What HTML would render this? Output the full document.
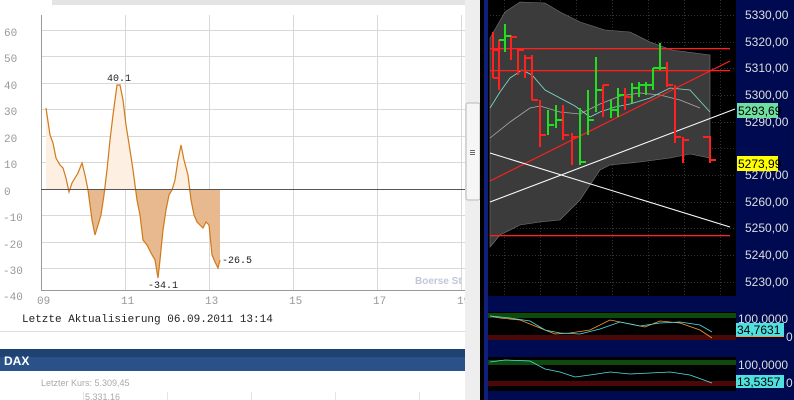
<!DOCTYPE html>
<html><head><meta charset="utf-8"><style>
html,body{margin:0;padding:0;width:794px;height:400px;overflow:hidden;background:#fff;font-family:"Liberation Sans",sans-serif}
</style></head><body>
<svg width="794" height="400" viewBox="0 0 794 400" xmlns="http://www.w3.org/2000/svg" style="position:absolute;left:0;top:0">
<defs>
<clipPath id="up"><rect x="0" y="0" width="470" height="189"/></clipPath>
<clipPath id="dn"><rect x="0" y="189" width="470" height="120"/></clipPath>
</defs>
<rect x="0" y="0" width="470" height="400" fill="#fff"/>
<rect x="52" y="0" width="413" height="5" fill="#e4e4e4"/>
<g stroke="#d8d8d8" stroke-width="1">
<line x1="41" y1="30.5" x2="465" y2="30.5"/><line x1="41" y1="56.5" x2="465" y2="56.5"/><line x1="41" y1="83.5" x2="465" y2="83.5"/><line x1="41" y1="109.5" x2="465" y2="109.5"/><line x1="41" y1="136.5" x2="465" y2="136.5"/><line x1="41" y1="162.5" x2="465" y2="162.5"/><line x1="41" y1="215.5" x2="465" y2="215.5"/><line x1="41" y1="242.5" x2="465" y2="242.5"/><line x1="41" y1="268.5" x2="465" y2="268.5"/>
<line x1="125.5" y1="15" x2="125.5" y2="290"/><line x1="209.5" y1="15" x2="209.5" y2="290"/><line x1="293.5" y1="15" x2="293.5" y2="290"/><line x1="377.5" y1="15" x2="377.5" y2="290"/><line x1="461.5" y1="15" x2="461.5" y2="290"/>
</g>
<line x1="41.5" y1="15" x2="41.5" y2="290" stroke="#999"/>
<line x1="41" y1="290.5" x2="465" y2="290.5" stroke="#999"/>
<polygon clip-path="url(#up)" fill="#fdf0e2" points="46,189 46,108 50,135 53,143 56,158 60,165 63,168 66,178 69,192 72,183 78,173 82,163 85,175 88,190 92,220 95,235 98,225 101,215 104,195 107,170 110,140 113,115 117,85 120,85 123,100 126,125 130,150 133,170 137,200 140,215 143,240 147,245 151,253 155,260 158,278 160,260 163,230 166,210 169,195 172,190 175,180 178,160 181,145 184,160 188,175 191,200 194,215 197,222 200,225 203,228 206,222 209,225 212,255 215,262 218,268 220,260 220,189"/>
<polygon clip-path="url(#dn)" fill="#e8b88e" points="46,189 46,108 50,135 53,143 56,158 60,165 63,168 66,178 69,192 72,183 78,173 82,163 85,175 88,190 92,220 95,235 98,225 101,215 104,195 107,170 110,140 113,115 117,85 120,85 123,100 126,125 130,150 133,170 137,200 140,215 143,240 147,245 151,253 155,260 158,278 160,260 163,230 166,210 169,195 172,190 175,180 178,160 181,145 184,160 188,175 191,200 194,215 197,222 200,225 203,228 206,222 209,225 212,255 215,262 218,268 220,260 220,189"/>
<polyline fill="none" stroke="#d07a1a" stroke-width="1.2" points="46,108 50,135 53,143 56,158 60,165 63,168 66,178 69,192 72,183 78,173 82,163 85,175 88,190 92,220 95,235 98,225 101,215 104,195 107,170 110,140 113,115 117,85 120,85 123,100 126,125 130,150 133,170 137,200 140,215 143,240 147,245 151,253 155,260 158,278 160,260 163,230 166,210 169,195 172,190 175,180 178,160 181,145 184,160 188,175 191,200 194,215 197,222 200,225 203,228 206,222 209,225 212,255 215,262 218,268 220,260"/>
<line x1="41" y1="189.5" x2="465" y2="189.5" stroke="#555"/>
<g font-family="Liberation Mono,monospace" font-size="10" fill="#222">
<text x="107" y="81">40.1</text><text x="148" y="288">-34.1</text><text x="222" y="263">-26.5</text>
</g>
<g font-family="Liberation Mono,monospace" font-size="11" fill="#999">
<text x="4" y="36">60</text><text x="4" y="62">50</text><text x="4" y="89">40</text><text x="4" y="115">30</text><text x="4" y="142">20</text><text x="4" y="168">10</text><text x="4" y="195">0</text><text x="3" y="221">-10</text><text x="3" y="248">-20</text><text x="3" y="274">-30</text><text x="3" y="300">-40</text>
<text x="37" y="304">09</text><text x="121" y="304">11</text><text x="205" y="304">13</text><text x="289" y="304">15</text><text x="373" y="304">17</text><text x="457" y="304">19</text>
</g>
<text x="415" y="284" font-size="10" fill="#c0c8d8" font-weight="bold">Boerse St</text>
<text x="22" y="322" font-family="Liberation Mono,monospace" font-size="11" fill="#222">Letzte Aktualisierung 06.09.2011 13:14</text>
<line x1="0" y1="331.5" x2="465" y2="331.5" stroke="#ddd"/>
<rect x="0" y="349" width="465" height="22" fill="#2a5288"/>
<rect x="0" y="349" width="465" height="8" fill="#1e4272"/>
<text x="4" y="365" font-size="12" font-weight="bold" fill="#fff">DAX</text>
<text x="41" y="386" font-size="9" fill="#aaa">Letzter Kurs: 5.309,45</text>
<text x="85" y="400" font-size="9" fill="#aaa">5.331,16</text>
<g stroke="#e4e4e4"><line x1="83.5" y1="392" x2="83.5" y2="400"/><line x1="167.5" y1="392" x2="167.5" y2="400"/><line x1="251.5" y1="392" x2="251.5" y2="400"/><line x1="335.5" y1="392" x2="335.5" y2="400"/><line x1="419.5" y1="392" x2="419.5" y2="400"/></g>
<rect x="465" y="0" width="15" height="400" fill="#eeeeee"/>
<rect x="466" y="103" width="14" height="97" rx="2" fill="#f6f6f6" stroke="#b8b8b8"/>
<g stroke="#666"><line x1="470" y1="150.5" x2="475" y2="150.5"/><line x1="470" y1="152.5" x2="475" y2="152.5"/><line x1="470" y1="154.5" x2="475" y2="154.5"/></g>
<rect x="480" y="0" width="314" height="400" fill="#000"/>
<rect x="484" y="0" width="4" height="400" fill="#10207a"/>
<rect x="736" y="0" width="58" height="296" fill="#000a50"/>
<rect x="488" y="296" width="306" height="104" fill="#000a50"/>
<rect x="488" y="312" width="248" height="28" fill="#000"/>
<rect x="488" y="357" width="248" height="34" fill="#000"/>
<g stroke="#333" stroke-dasharray="1,2">
<line x1="490" y1="15.5" x2="735" y2="15.5"/><line x1="490" y1="42.5" x2="735" y2="42.5"/><line x1="490" y1="68.5" x2="735" y2="68.5"/><line x1="490" y1="95.5" x2="735" y2="95.5"/><line x1="490" y1="122.5" x2="735" y2="122.5"/><line x1="490" y1="148.5" x2="735" y2="148.5"/><line x1="490" y1="175.5" x2="735" y2="175.5"/><line x1="490" y1="202.5" x2="735" y2="202.5"/><line x1="490" y1="228.5" x2="735" y2="228.5"/><line x1="490" y1="255.5" x2="735" y2="255.5"/><line x1="490" y1="282.5" x2="735" y2="282.5"/>
<line x1="504.5" y1="0" x2="504.5" y2="295"/><line x1="540.5" y1="0" x2="540.5" y2="295"/><line x1="576.5" y1="0" x2="576.5" y2="295"/><line x1="612.5" y1="0" x2="612.5" y2="295"/><line x1="648.5" y1="0" x2="648.5" y2="295"/><line x1="684.5" y1="0" x2="684.5" y2="295"/><line x1="720.5" y1="0" x2="720.5" y2="295"/>
</g>
<polygon fill="#3b3b3b" stroke="#777" stroke-width="0.6" points="490,38 505,12 520,2 545,3 560,12 580,22 605,30 630,32 650,42 672,50 710,55 710,158 690,154 670,158 640,162 610,165 600,170 590,185 580,200 570,210 560,220 540,222 520,225 500,235 490,247"/>
<polyline fill="none" stroke="#aaa" stroke-width="0.8" points="490,138 510,122 530,108 540,106 560,112 580,114 600,104 620,96 640,93 660,95 680,100 700,108"/>
<polyline fill="none" stroke="#7fe0d0" stroke-width="0.8" points="490,108 500,92 510,78 522,70 532,75 545,90 560,98 575,106 590,117 600,112 615,107 630,104 650,98 670,88 690,90 710,112"/>
<rect x="490" y="48" width="240" height="1.3" fill="#ff2020"/>
<rect x="490" y="70" width="240" height="1.3" fill="#ff2020"/>
<rect x="490" y="235" width="240" height="1.3" fill="#ff2020"/>
<line x1="490" y1="181" x2="730" y2="61" stroke="#ff2020" stroke-width="1.2"/>
<g stroke="#fff" stroke-width="1"><line x1="490" y1="202" x2="735" y2="109"/><line x1="490" y1="153" x2="730" y2="227"/></g>
<g stroke-width="2" fill="none">
<path stroke="#ff2020" d="M493,32V78M499,40V90M511,35V60M518,48V75M525,55V78M532,55V100M540,100V147M563,105V140M572,133V165M603,85V117M625,88V110M667,62V87M675,85V143M683,137V163M710,137V163"/>
<path stroke="#22dd22" d="M505,24V52M548,110V135M556,105V128M580,108V165M588,90V135M596,57V112M611,100V118M618,88V117M632,83V103M639,82V97M646,82V95M653,68V90M660,43V70"/>
<path stroke="#ff2020" d="M493,50H499M493,78H499M511,37H517M518,50H524M525,58H531M532,100H538M540,135H546M563,135H569M572,137H578M603,85H609M625,97H631M667,85H673M675,137H681M683,140H689M710,160H716M703,137H710V163"/>
<path stroke="#22dd22" d="M499,40H505M505,36H511M548,125H554M556,120H562M580,162H586M588,120H594M596,90H602M611,110H617M618,95H624M632,88H638M639,85H645M646,85H652M653,68H659M660,68H666"/>
</g>
<g font-family="Liberation Sans,sans-serif" font-size="12" fill="#ddd">
<text x="745" y="19">5330,00</text><text x="745" y="46">5320,00</text><text x="745" y="72">5310,00</text><text x="745" y="99">5300,00</text><text x="745" y="126">5290,00</text><text x="745" y="179">5270,00</text><text x="745" y="206">5260,00</text><text x="745" y="232">5250,00</text><text x="745" y="259">5240,00</text><text x="745" y="286">5230,00</text>
</g>
<rect x="737" y="103" width="41" height="15" fill="#70e0a0"/><text x="738" y="115" font-size="12" fill="#000">5293,69</text>
<rect x="737" y="156" width="41" height="15" fill="#ffff00"/><text x="738" y="168" font-size="12" fill="#000">5273,99</text>
<rect x="488" y="313" width="248" height="5" fill="#0e4a0e"/>
<rect x="488" y="335" width="248" height="5" fill="#4a0808"/>
<polyline fill="none" stroke="#ff9a30" stroke-width="0.8" points="490,316 500,318 520,320 540,328 555,334 570,333 590,330 610,320 625,323 645,327 660,321 680,323 700,330 712,338"/>
<polyline fill="none" stroke="#50e0e0" stroke-width="0.8" points="490,316 510,318 530,321 545,330 560,333 580,334 600,329 620,322 640,326 660,323 680,322 700,325 712,332"/>
<rect x="488" y="360" width="248" height="5" fill="#0e4a0e"/>
<rect x="488" y="381" width="248" height="5" fill="#4a0808"/>
<polyline fill="none" stroke="#50e0e0" stroke-width="0.8" points="490,362 505,360 530,361 545,369 560,372 575,377 590,375 610,372 630,374 650,373 670,372 690,375 712,383"/>
<g font-size="12" fill="#ddd"><text x="738" y="323">100,0000</text><text x="738" y="369">100,0000</text><text x="786" y="341">0</text><text x="786" y="387">0</text></g>
<rect x="736" y="325" width="48" height="12" fill="#ff9a30"/>
<rect x="736" y="323" width="48" height="13" fill="#50e0e0"/><text x="737" y="334" font-size="12" fill="#000">34,7631</text>
<rect x="736" y="375" width="48" height="13" fill="#50e0e0"/><text x="737" y="386" font-size="12" fill="#000">13,5357</text>
</svg>
</body></html>
